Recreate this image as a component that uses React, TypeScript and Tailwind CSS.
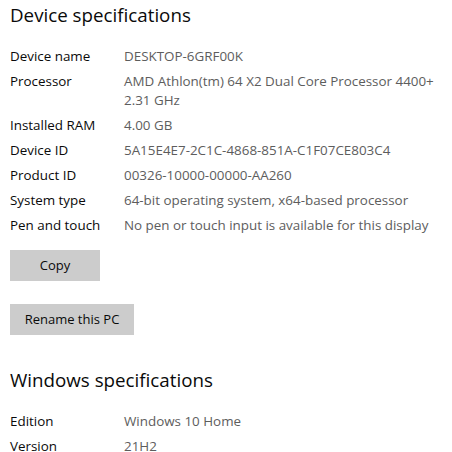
export default function App() {
  const device: [string, string[]][] = [
    ["Device name", ["DESKTOP-6GRF00K"]],
    ["Processor", ["AMD Athlon(tm) 64 X2 Dual Core Processor 4400+", "2.31 GHz"]],
    ["Installed RAM", ["4.00 GB"]],
    ["Device ID", ["5A15E4E7-2C1C-4868-851A-C1F07CE803C4"]],
    ["Product ID", ["00326-10000-00000-AA260"]],
    ["System type", ["64-bit operating system, x64-based processor"]],
    ["Pen and touch", ["No pen or touch input is available for this display"]],
  ]
  const windows: [string, string[]][] = [
    ["Edition", ["Windows 10 Home"]],
    ["Version", ["21H2"]],
  ]

  const Rows = ({ rows }: { rows: [string, string[]][] }) => (
    <div className="flex flex-col gap-[6px]">
      {rows.map(([label, value]) => (
        <div key={label} className="grid grid-cols-[114px_1fr] text-[13.4px] leading-[19px]">
          <div className="text-[#0a0a0a]">{label}</div>
          <div className="text-[#5d5d5d]">
            {value.map((v) => (
              <div key={v}>{v}</div>
            ))}
          </div>
        </div>
      ))}
    </div>
  )

  return (
    <div
      className="w-[452px] h-[452px] overflow-hidden bg-white pl-[10px]"
      style={{ fontFamily: '"Open Sans", "Noto Sans", sans-serif' }}
    >
      <h1 className="text-[18.75px] leading-[28px] text-[#0a0a0a] pt-[1px]">Device specifications</h1>

      <div className="mt-[18px]">
        <Rows rows={device} />
      </div>

      <button className="mt-[15px] block w-[90px] h-[31px] bg-[#cccccc] text-[13px] text-[#0a0a0a]">
        Copy
      </button>
      <button className="mt-[23px] block w-[124px] h-[31px] bg-[#cccccc] text-[13px] text-[#0a0a0a]">
        Rename this PC
      </button>

      <h1 className="mt-[31px] text-[18.75px] leading-[28px] text-[#0a0a0a]">Windows specifications</h1>

      <div className="mt-[18px]">
        <Rows rows={windows} />
      </div>
    </div>
  )
}
